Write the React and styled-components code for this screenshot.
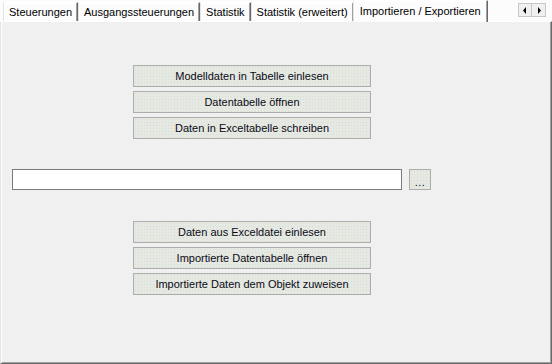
import React from "react";
import styled, { createGlobalStyle } from "styled-components";

const Global = createGlobalStyle`
  html, body { margin: 0; padding: 0; background: #ffffff; }
  body { font-family: "Liberation Sans", Arial, sans-serif; font-size: 11px; color: #000; }
`;

const Frame = styled.div`
  width: 552px;
  height: 364px;
  display: flex;
  flex-direction: column;
  background: #fcfcfc;
  overflow: hidden;
`;

const TabStrip = styled.div`
  height: 21px;
  display: flex;
  align-items: flex-end;
  padding-left: 3px;
  flex-shrink: 0;
`;

const Tab = styled.div`
  box-sizing: border-box;
  height: ${(p) => (p.$active ? "22px" : "19px")};
  padding: ${(p) => (p.$active ? "3px 6px 0 6px" : "2px 5px 0 5px")};
  margin: ${(p) => (p.$active ? "0 0 -1px -1px" : "0")};
  background: #fcfcfc;
  border-top: 1px solid #ffffff;
  border-left: 1px solid #e3e3e3;
  box-shadow: inset -1px 0 0 #a0a0a0, inset 1px 1px 0 #ffffff;
  border-right: 1px solid #696969;
  white-space: nowrap;
  line-height: 14px;
  position: relative;
  z-index: ${(p) => (p.$active ? 2 : 1)};
`;

const Arrows = styled.div`
  display: flex;
  align-self: flex-start;
  margin: 3px 0 0 auto;
  margin-right: 6px;
`;

const ArrowBtn = styled.div`
  box-sizing: border-box;
  width: 14px;
  height: 14px;
  display: flex;
  align-items: center;
  justify-content: center;
  background: #f0f0f0;
  border: 1px solid #c8c8c8;
  & + & { border-left: none; }
`;

const Panel = styled.div`
  flex: 1;
  display: flex;
  flex-direction: column;
  background: #f0f0f0;
  border-top: 1px solid #ffffff;
  border-left: 1px solid #e3e3e3;
  border-right: 1px solid #696969;
  border-bottom: 1px solid #696969;
  box-shadow: inset 1px 0 0 #ffffff, inset -1px -1px 0 #a0a0a0;
  padding: 43px 0 0 132px;
  position: relative;
  z-index: 1;
`;

const ButtonGroup = styled.div`
  display: flex;
  flex-direction: column;
  gap: 4px;
`;

const Button = styled.div`
  box-sizing: border-box;
  width: 238px;
  height: 22px;
  display: flex;
  align-items: center;
  justify-content: center;
  border: 1px solid #adadad;
  background: radial-gradient(circle, #d3dfca 0.7px, transparent 0.9px) 0 0 / 3px 3px, #e6e8e4;
  color: #0a0a14;
  font-size: 11px;
  white-space: nowrap;
`;

const FileRow = styled.div`
  display: flex;
  align-items: center;
  gap: 7px;
  margin: 30px 0 31px -121px;
`;

const Field = styled.div`
  box-sizing: border-box;
  width: 390px;
  height: 21px;
  background: #ffffff;
  border: 1px solid #7a7a7a;
`;

const BrowseBtn = styled(Button)`
  width: 22px;
  height: 21px;
  padding-top: 4px;
  letter-spacing: 0.5px;
`;

const Arrow = ({ dir }) => (
  <svg width="4" height="7" viewBox="0 0 4 7">
    {dir === "left" ? (
      <path d="M3 0 L3 7 L0 3.5 Z" fill="#000" />
    ) : (
      <path d="M1 0 L1 7 L4 3.5 Z" fill="#000" />
    )}
  </svg>
);

export default function App() {
  const tabs = [
    "Steuerungen",
    "Ausgangssteuerungen",
    "Statistik",
    "Statistik (erweitert)",
    "Importieren / Exportieren",
  ];
  return (
    <>
      <Global />
      <Frame>
        <TabStrip>
          {tabs.map((t, i) => (
            <Tab key={t} $active={i === tabs.length - 1}>
              {t}
            </Tab>
          ))}
          <Arrows>
            <ArrowBtn><Arrow dir="left" /></ArrowBtn>
            <ArrowBtn><Arrow dir="right" /></ArrowBtn>
          </Arrows>
        </TabStrip>
        <Panel>
          <ButtonGroup>
            <Button>Modelldaten in Tabelle einlesen</Button>
            <Button>Datentabelle öffnen</Button>
            <Button>Daten in Exceltabelle schreiben</Button>
          </ButtonGroup>
          <FileRow>
            <Field />
            <BrowseBtn>...</BrowseBtn>
          </FileRow>
          <ButtonGroup>
            <Button>Daten aus Exceldatei einlesen</Button>
            <Button>Importierte Datentabelle öffnen</Button>
            <Button>Importierte Daten dem Objekt zuweisen</Button>
          </ButtonGroup>
        </Panel>
      </Frame>
    </>
  );
}
